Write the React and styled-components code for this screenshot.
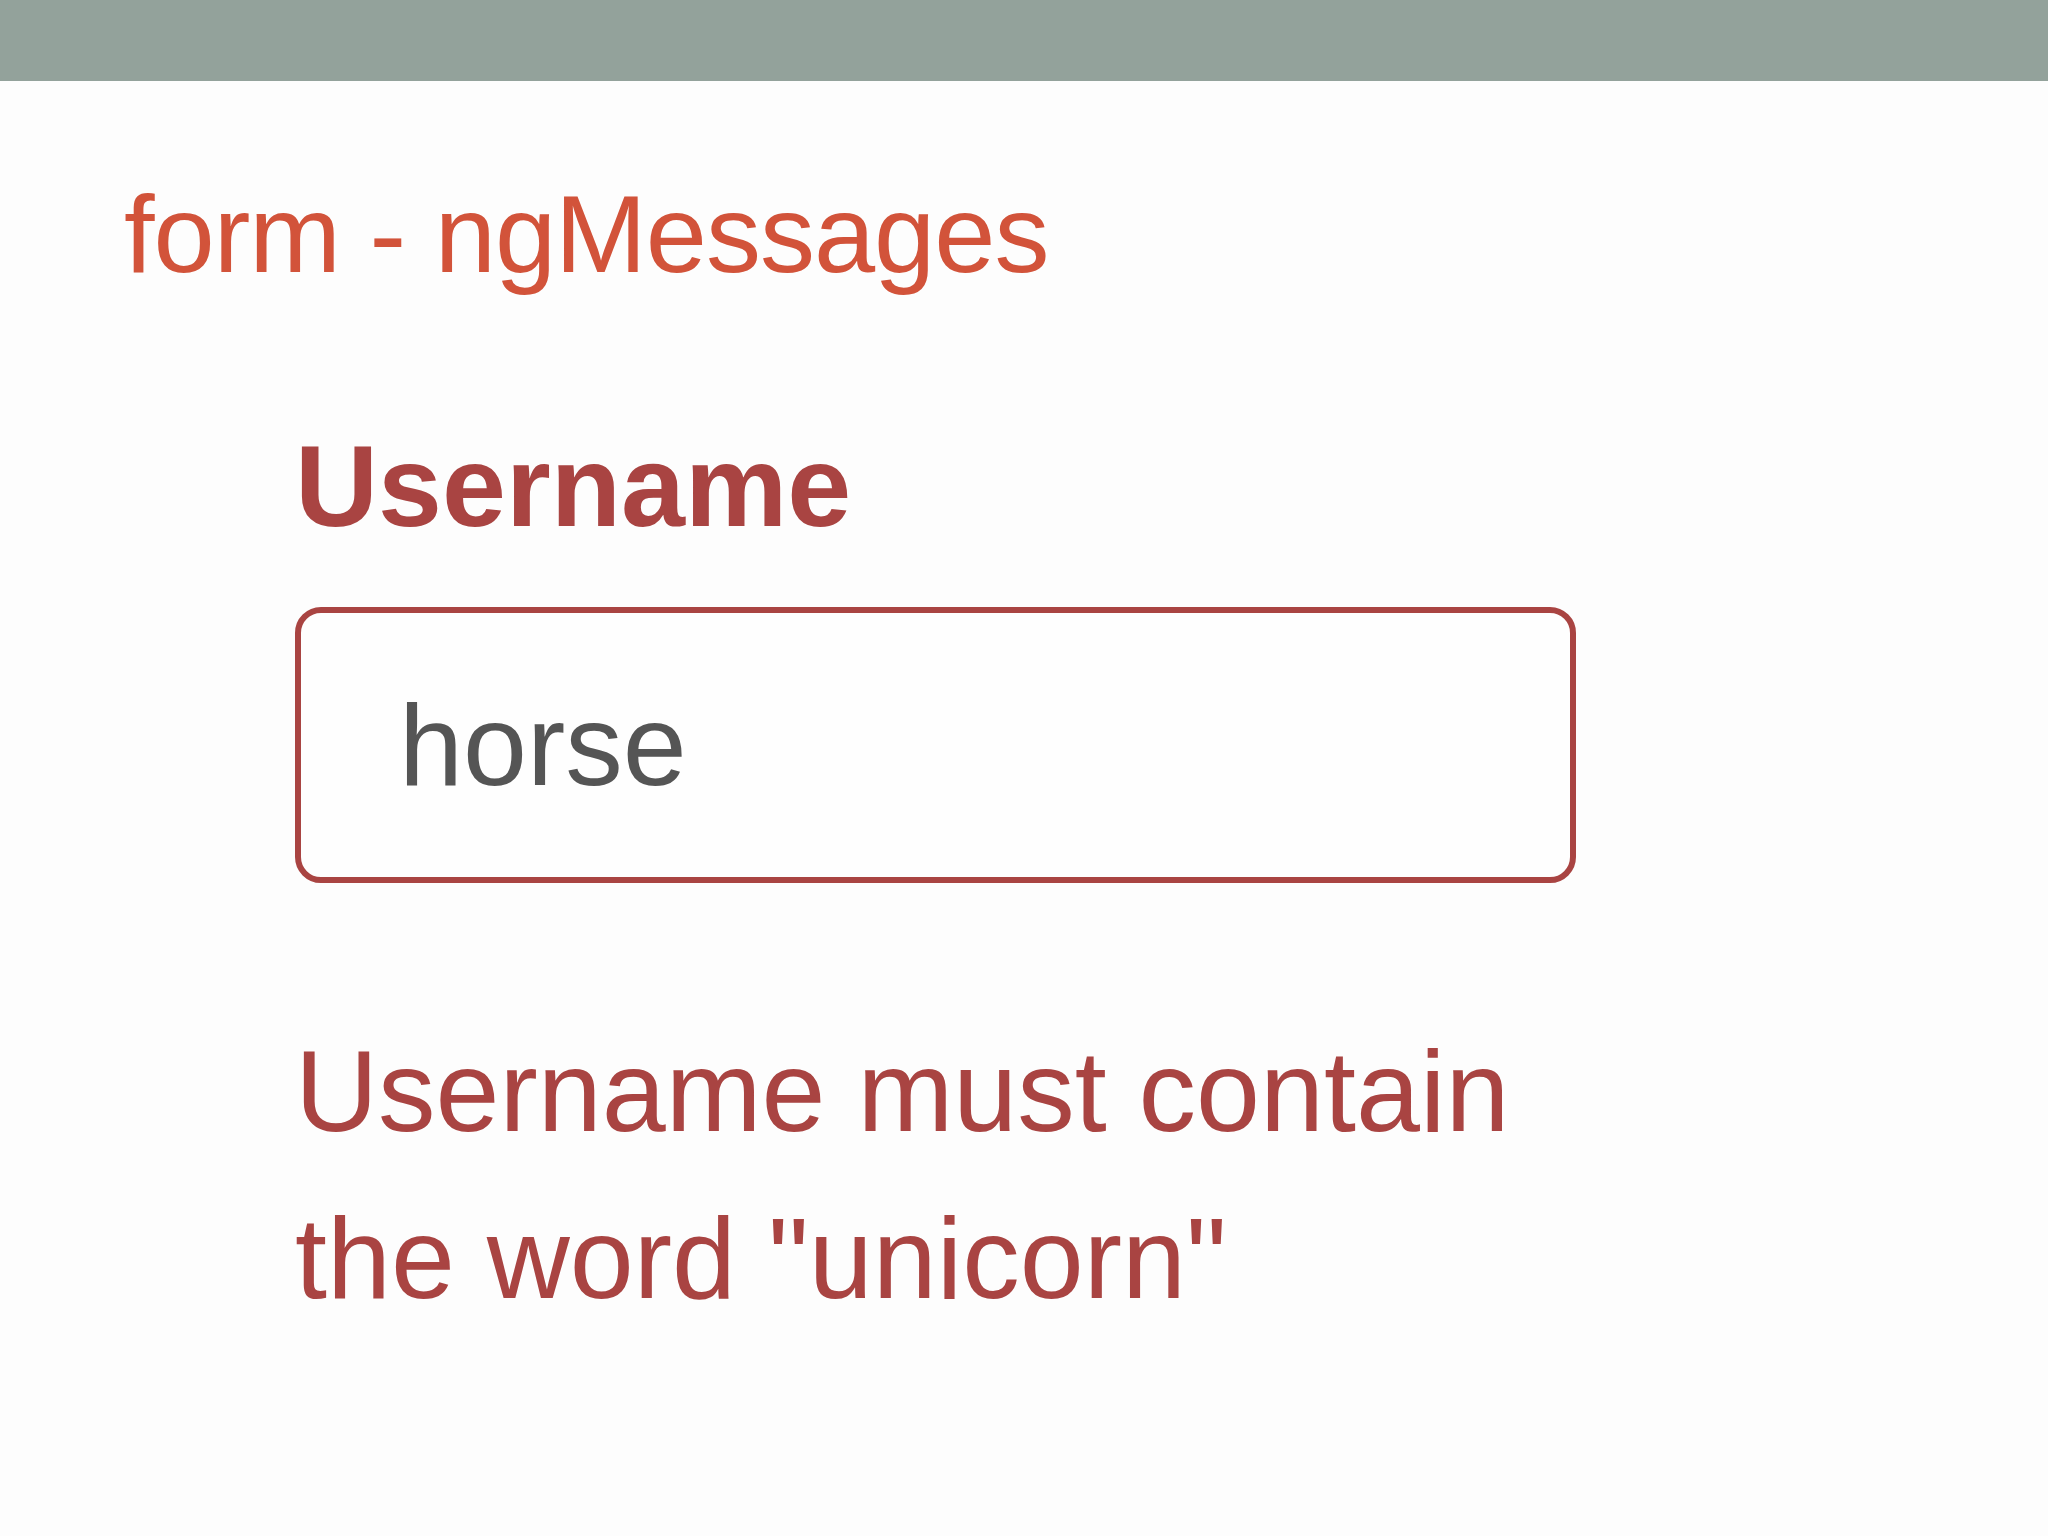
import React from "react";
import styled, { createGlobalStyle } from "styled-components";

const GlobalStyle = createGlobalStyle`
  html, body {
    margin: 0;
    padding: 0;
    background: #fdfdfd;
  }
  body {
    font-family: "Liberation Sans", Arial, sans-serif;
  }
`;

const App = () => {
  return (
    <Slide>
      <GlobalStyle />
      <TopBar />
      <Title>form - ngMessages</Title>
      <FormGroup>
        <Label htmlFor="username">Username</Label>
        <TextInput id="username" type="text" defaultValue="horse" />
        <ErrorMessage>Username must contain the word "unicorn"</ErrorMessage>
      </FormGroup>
    </Slide>
  );
};

// ------------------------------- Styled Components --------------------------------------------

const Slide = styled.div({
  minHeight: "1536px",
  background: "#fdfdfd",
  display: "flex",
  flexDirection: "column"
});

const TopBar = styled.div({
  height: "81px",
  background: "#93a29b"
});

const Title = styled.h1({
  margin: "98px 0 0 124px",
  fontFamily: '"Liberation Sans", Arial, sans-serif',
  fontWeight: "normal",
  fontSize: "110px",
  lineHeight: "110px",
  color: "#d2533a",
  letterSpacing: "-1px"
});

const FormGroup = styled.div({
  display: "flex",
  flexDirection: "column",
  width: "1281px",
  marginLeft: "295px",
  paddingTop: "140px"
});

const Label = styled.label({
  fontWeight: "bold",
  fontSize: "115px",
  lineHeight: "115px",
  color: "#a94442"
});

const TextInput = styled.input({
  marginTop: "63px",
  boxSizing: "border-box",
  width: "100%",
  height: "276px",
  border: "6px solid #a94442",
  borderRadius: "26px",
  background: "#fefefe",
  padding: "0 0 0 98px",
  fontFamily: '"Liberation Sans", Arial, sans-serif',
  fontSize: "115px",
  color: "#555555",
  outline: "none"
});

const ErrorMessage = styled.p({
  margin: "125px 0 0 0",
  fontSize: "115px",
  lineHeight: "167px",
  color: "#a94442"
});

export default App;
